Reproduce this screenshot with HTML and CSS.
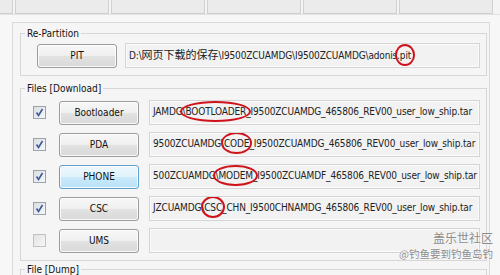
FILE: index.html
```html
<!DOCTYPE html>
<html lang="zh-CN">
<head>
<meta charset="utf-8">
<title>Odin</title>
<link rel="stylesheet" href="styles.css">
</head>
<body>
<div class="tabs">
  <div class="tab"></div><div class="tab"></div><div class="tab"></div><div class="tab"></div><div class="tab"></div><div class="tab"></div>
</div>
<div class="panel">
  <fieldset class="group repart">
    <legend>Re-Partition</legend>
    <div class="row pit-row">
      <button class="btn">PIT</button>
      <div class="field">D:\<span class="cjk">网页下载的保存</span>\I9500ZCUAMDG\I9500ZCUAMDG\adonis.<span class="mark m-pit">pit</span></div>
    </div>
  </fieldset>
  <fieldset class="group files">
    <legend>Files [Download]</legend>
    <div class="rows">
      <div class="row">
        <span class="chk on"><svg viewBox="0 0 13 13" width="13" height="13"><path d="M3.5 6.5 L5.5 9.5 L9.5 3" fill="none" stroke="#3d5a98" stroke-width="1.6"/></svg></span>
        <button class="btn">Bootloader</button>
        <div class="field">JAMDG\<span class="mark m-boot">BOOTLOADER</span>_I9500ZCUAMDG_465806_REV00_user_low_ship.tar</div>
      </div>
      <div class="row">
        <span class="chk on"><svg viewBox="0 0 13 13" width="13" height="13"><path d="M3.5 6.5 L5.5 9.5 L9.5 3" fill="none" stroke="#3d5a98" stroke-width="1.6"/></svg></span>
        <button class="btn">PDA</button>
        <div class="field">9500ZCUAMDG\<span class="mark m-code">CODE</span>_I9500ZCUAMDG_465806_REV00_user_low_ship.tar</div>
      </div>
      <div class="row">
        <span class="chk on"><svg viewBox="0 0 13 13" width="13" height="13"><path d="M3.5 6.5 L5.5 9.5 L9.5 3" fill="none" stroke="#3d5a98" stroke-width="1.6"/></svg></span>
        <button class="btn hot">PHONE</button>
        <div class="field">500ZCUAMDG\<span class="mark m-modem">MODEM</span>_I9500ZCUAMDF_465806_REV00_user_low_ship.tar</div>
      </div>
      <div class="row">
        <span class="chk on"><svg viewBox="0 0 13 13" width="13" height="13"><path d="M3.5 6.5 L5.5 9.5 L9.5 3" fill="none" stroke="#3d5a98" stroke-width="1.6"/></svg></span>
        <button class="btn">CSC</button>
        <div class="field">JZCUAMDG\<span class="mark m-csc">CSC</span>_CHN_I9500CHNAMDG_465806_REV00_user_low_ship.tar</div>
      </div>
      <div class="row">
        <span class="chk off"></span>
        <button class="btn">UMS</button>
        <div class="field"></div>
      </div>
    </div>
  </fieldset>
  <fieldset class="group dump">
    <legend>File [Dump]</legend>
  </fieldset>
</div>
<div class="watermark">
  <div class="wm1">盖乐世社区</div>
  <div class="wm2">@钓鱼要到钓鱼岛钓</div>
</div>
</body>
</html>
```
FILE: styles.css
```css
html, body {
  margin: 0;
  padding: 0;
}
body {
  width: 500px;
  height: 275px;
  overflow: hidden;
  position: relative;
  background: #f7f7f7;
  font-family: "DejaVu Sans Condensed", "DejaVu Sans", "Noto Sans CJK SC", sans-serif;
  font-stretch: condensed;
  font-size: 10px;
  color: #1a1a1a;
}
.tabs {
  display: flex;
  gap: 2px;
  height: 14px;
  margin-left: -81px;
  border-bottom: 1px solid #e2e2e2;
  background: #f4f4f4;
}
.tab {
  flex: 0 0 92px;
  height: 13px;
  border: 1px solid #d0d0d0;
  border-top: none;
  background: #ebebeb;
}
.panel {
  margin: 7px 10px 0 12px;
  border: 1px solid #dadada;
  border-bottom: none;
  background: #f5f5f5;
  padding: 0 2px 0 7px;
  height: 253px;
  overflow: hidden;
}
.group {
  margin: 4px 0 0 0;
  padding: 0;
  border: 1px solid #d6d6d6;
  min-width: 0;
}
.group legend {
  margin-left: 4px;
  padding: 0 2px;
  line-height: 13px;
  color: #111;
}
.repart .row {
  padding: 3px 6px 7px 16px;
}
.files {
  margin-top: 6px;
}
.rows {
  display: flex;
  flex-direction: column;
  gap: 7px;
  padding: 5px 6px 7px 12px;
}
.dump {
  margin-top: 2px;
  height: 20px;
}
.row {
  display: flex;
  align-items: center;
}
.btn {
  flex: 0 0 80px;
  height: 24px;
  margin: 0;
  padding: 0;
  border: 1px solid #9c9c9c;
  border-radius: 3px;
  background: linear-gradient(#f7f7f7 0%, #efefef 50%, #e2e2e2 51%, #d9d9d9 100%);
  box-shadow: inset 0 0 0 1px rgba(255,255,255,0.8);
  font: inherit;
  font-stretch: condensed;
  color: #111;
}
.btn.hot {
  border-color: #5fa0cf;
  background: linear-gradient(#eef8fe 0%, #e0f2fc 50%, #cbeafb 51%, #b9e1f7 100%);
}
.files .btn {
  margin-left: 13px;
}
.field {
  flex: 1;
  height: 25px;
  box-sizing: border-box;
  margin-left: 8px;
  padding: 4px 0 0 3px;
  border: 1px solid #d4d4d4;
  background: #f2f2f2;
  box-shadow: inset 0 0 0 1px #fbfbfb;
  line-height: 13px;
  letter-spacing: -0.15px;
  white-space: nowrap;
  overflow: hidden;
  color: #222;
}
.cjk {
  font-family: "Noto Sans CJK SC", sans-serif;
  font-size: 11px;
  font-stretch: normal;
  letter-spacing: 0;
}
.files .field {
  margin-left: 10px;
  padding-left: 3px;
}
.chk {
  flex: 0 0 13px;
  width: 13px;
  height: 13px;
  box-sizing: border-box;
  border: 1px solid #9aa3ad;
  background: linear-gradient(135deg, #dcdee2, #f6f7f8);
  display: block;
  position: relative;
}
.chk svg {
  position: absolute;
  left: -1px;
  top: -1px;
}
.chk.off {
  border-color: #c2c2c2;
  background: linear-gradient(135deg, #e3e3e3, #f7f7f7);
}
.mark {
  position: relative;
}
.mark::after {
  content: "";
  position: absolute;
  border: 2px solid #d0121b;
  border-radius: 50%;
  left: -5px;
  right: -5px;
  top: -5px;
  bottom: -5px;
}
.m-pit::after {
  left: -5px;
  right: -4px;
  top: -6px;
  bottom: -5px;
}
.m-code::after,
.m-csc::after {
  left: -3px;
  right: -3px;
  top: -6px;
  bottom: -5px;
}
.watermark {
  position: absolute;
  right: 7px;
  top: 230px;
  text-align: right;
  color: #8a8a8a;
  text-shadow: 0 0 1px #fff, 0 0 1px #fff;
  font-family: "Noto Sans CJK SC", sans-serif;
}
.wm1 {
  font-size: 12px;
  line-height: 16px;
}
.wm2 {
  font-size: 10.5px;
  line-height: 15px;
}
```
